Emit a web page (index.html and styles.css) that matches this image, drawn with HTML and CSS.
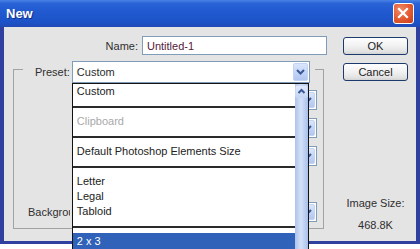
FILE: index.html
```html
<!DOCTYPE html>
<html>
<head>
<meta charset="utf-8">
<title>New</title>
<link rel="stylesheet" href="styles.css">
</head>
<body>
<div class="window">
  <div class="titlebar">
    <span class="title">New</span>
    <span class="close">
      <svg width="21" height="21" viewBox="0 0 21 21"><path d="M6 6 L14 14 M14 6 L6 14" stroke="#fff" stroke-width="2.2" stroke-linecap="square" fill="none"/></svg>
    </span>
  </div>
  <div class="client">
    <div class="main">
      <div class="name-row">
        <span class="lbl">Name:</span>
        <div class="textbox name-box">Untitled-1</div>
      </div>
      <fieldset class="group">
        <legend class="preset">
          <span class="lbl preset-lbl">Preset:</span>
          <div class="combo preset-combo">
            <span class="combo-text">Custom</span>
            <span class="combo-btn"><svg width="13" height="16" viewBox="0 0 13 16"><path d="M3 6 L6.5 9.5 L10 6" stroke="#3a5893" stroke-width="2" fill="none"/></svg></span>
            <div class="droplist">
              <div class="items">
                <div class="item">Custom</div>
                <div class="sep"></div>
                <div class="item disabled">Clipboard</div>
                <div class="sep"></div>
                <div class="item">Default Photoshop Elements Size</div>
                <div class="sep"></div>
                <div class="item">Letter</div>
                <div class="item">Legal</div>
                <div class="item">Tabloid</div>
                <div class="sep sep-short"></div>
                <div class="item selected">2 x 3</div>
              </div>
              <div class="scrollbar">
                <div class="scroll-up"><svg width="11" height="11" viewBox="0 0 11 11"><path d="M2.5 7 L5.5 4 L8.5 7" stroke="#3a5893" stroke-width="2" fill="none"/></svg></div>
                <div class="scroll-track"></div>
              </div>
            </div>
          </div>
        </legend>
        <div class="fields">
          <span class="lbl field-lbl"></span>
          <div class="controls">
            <div class="combo unit-combo"><span class="combo-btn"><svg width="13" height="16" viewBox="0 0 13 16"><path d="M3 6 L6.5 9.5 L10 6" stroke="#3a5893" stroke-width="2" fill="none"/></svg></span></div>
          </div>
          <span class="lbl field-lbl"></span>
          <div class="controls">
            <div class="combo unit-combo"><span class="combo-btn"><svg width="13" height="16" viewBox="0 0 13 16"><path d="M3 6 L6.5 9.5 L10 6" stroke="#3a5893" stroke-width="2" fill="none"/></svg></span></div>
          </div>
          <span class="lbl field-lbl"></span>
          <div class="controls">
            <div class="combo unit-combo"><span class="combo-btn"><svg width="13" height="16" viewBox="0 0 13 16"><path d="M3 6 L6.5 9.5 L10 6" stroke="#3a5893" stroke-width="2" fill="none"/></svg></span></div>
          </div>
          <span class="lbl field-lbl"></span>
          <div class="controls"></div>
          <span class="lbl field-lbl clip-lbl">Background Contents:</span>
          <div class="controls">
            <div class="combo bg-combo"><span class="combo-btn"><svg width="13" height="16" viewBox="0 0 13 16"><path d="M3 6 L6.5 9.5 L10 6" stroke="#3a5893" stroke-width="2" fill="none"/></svg></span></div>
          </div>
        </div>
      </fieldset>
    </div>
    <div class="side">
      <button class="btn">OK</button>
      <button class="btn">Cancel</button>
      <div class="imgsize">
        <div class="imgsize-line">Image Size:</div>
        <div class="imgsize-line">468.8K</div>
      </div>
    </div>
  </div>
</div>
</body>
</html>
```

FILE: styles.css
```css
html, body {
  margin: 0;
  padding: 0;
  overflow: hidden;
  background: #ffffff;
}

body {
  width: 420px;
  height: 249px;
  font-family: "Liberation Sans", Arial, sans-serif;
  font-size: 11px;
  color: #2b2b2b;
}

.window {
  width: 420px;
  height: 244px;
  box-sizing: border-box;
  display: flex;
  flex-direction: column;
  background: #30409e;
}

.titlebar {
  height: 27px;
  flex: none;
  display: flex;
  align-items: center;
  background: linear-gradient(#4a83e6 0%, #2a63d6 12%, #1f58cf 50%, #1c52c6 85%, #2149b4 100%);
}

.title {
  padding-left: 6px;
  font-weight: bold;
  font-size: 13px;
  color: #ffffff;
  text-shadow: 1px 1px 0 #10308a;
}

.close {
  margin-left: auto;
  margin-right: 6px;
  width: 21px;
  height: 21px;
  box-sizing: border-box;
  border: 1px solid #ffffff;
  border-radius: 3px;
  background: radial-gradient(circle at 35% 30%, #f08a6a 0%, #e2582f 55%, #c63d1a 100%);
  display: flex;
  align-items: center;
  justify-content: center;
}

.close svg {
  display: block;
  margin: -1px;
}

.client {
  flex: 1;
  margin: 0 4px 3px 4px;
  background: #e4e4e4;
  display: flex;
  min-height: 0;
}

.main {
  width: 326px;
  box-sizing: border-box;
  padding: 9px 0 0 9px;
}

.lbl {
  white-space: nowrap;
  color: #2f2f2f;
}

.name-row {
  display: flex;
  align-items: center;
  justify-content: flex-end;
  padding-right: 3px;
}

.name-row .lbl {
  margin-right: 4px;
}

.textbox {
  height: 19px;
  box-sizing: border-box;
  border: 1px solid #7f9db9;
  background: #ffffff;
  padding-left: 4px;
  display: flex;
  align-items: center;
}

.name-box {
  width: 185px;
  color: #55203a;
}

.group {
  margin: 0 6px 0 0;
  padding: 0 6px 6px 9px;
  border: 1px solid #a2a2a2;
  min-width: 0;
}

.preset {
  display: flex;
  align-items: center;
  padding: 6px 5px 0 12px;
}

.preset-lbl {
  margin-right: 2px;
}

.combo {
  position: relative;
  height: 20px;
  box-sizing: border-box;
  border: 1px solid #7f9db9;
  background: #ffffff;
  display: flex;
  align-items: center;
}

.combo-text {
  padding-left: 4px;
  white-space: nowrap;
  overflow: hidden;
}

.combo-btn {
  margin-left: auto;
  margin-right: 1px;
  width: 15px;
  height: 16px;
  box-sizing: border-box;
  border: 1px solid #c3d3f5;
  border-radius: 2px;
  background: linear-gradient(#dbe6fc, #c0d2f6 60%, #b2c6f0);
  display: flex;
  align-items: center;
  justify-content: center;
  flex: none;
}

.combo-btn svg {
  display: block;
}

.preset-combo {
  width: 238px;
  height: 22px;
}

.preset-combo .combo-btn {
  height: 18px;
}

.droplist {
  position: absolute;
  top: 21px;
  left: -1px;
  width: 237px;
  height: 166px;
  box-sizing: border-box;
  border: 1px solid #121212;
  border-bottom: none;
  background: #ffffff;
  display: flex;
  overflow: hidden;
  z-index: 10;
}

.items {
  flex: 1;
  min-width: 0;
}

.item {
  height: 15px;
  line-height: 15px;
  padding-left: 4px;
  color: #222222;
  white-space: nowrap;
}

.item.disabled {
  color: #a9a9a9;
}

.item.selected {
  height: 16px;
  line-height: 16px;
  background: #2f62b8;
  color: #ffffff;
}

.sep {
  height: 15px;
  position: relative;
}

.sep::after {
  content: "";
  position: absolute;
  left: 0;
  right: 0;
  top: 7px;
  height: 2px;
  background: #2a2a2a;
}

.sep-short {
  height: 14px;
}

.scrollbar {
  width: 13px;
  flex: none;
  display: flex;
  flex-direction: column;
  background: linear-gradient(90deg, #aec3ea, #d3e1f9 45%, #c1d3f3 70%, #a9bfe8);
}

.scroll-up {
  height: 13px;
  margin-top: 1px;
  box-sizing: border-box;
  border: 1px solid #c6d6f6;
  border-radius: 2px;
  background: linear-gradient(#e2ebfd, #c4d5f6);
  display: flex;
  align-items: center;
  justify-content: center;
}

.scroll-up svg {
  display: block;
}

.scroll-track {
  flex: 1;
}

.fields {
  display: grid;
  grid-template-columns: 42px 1fr;
  grid-auto-rows: 20px;
  row-gap: 8px;
  column-gap: 6px;
  align-items: center;
  padding: 7px 0 0 5px;
}

.clip-lbl {
  width: 42px;
  overflow: hidden;
}

.controls {
  display: flex;
  align-items: center;
  height: 20px;
}

.unit-combo {
  margin-left: auto;
  width: 90px;
}

.bg-combo {
  margin-left: auto;
  width: 175px;
}

.side {
  width: 65px;
  margin-left: 13px;
  padding: 10px 0 5px 0;
  display: flex;
  flex-direction: column;
  gap: 8px;
}

.btn {
  height: 18px;
  width: 65px;
  padding: 0;
  box-sizing: border-box;
  border: 1px solid #1d3a6c;
  border-radius: 3px;
  background: linear-gradient(#fefefe, #f1f1f1 50%, #e2e2e2 85%, #d2d2d2);
  font-family: "Liberation Sans", Arial, sans-serif;
  font-size: 11px;
  color: #222222;
  line-height: 16px;
}

.imgsize {
  margin-top: auto;
  text-align: center;
  color: #2f2f2f;
}

.imgsize-line {
  line-height: 22px;
}
```
